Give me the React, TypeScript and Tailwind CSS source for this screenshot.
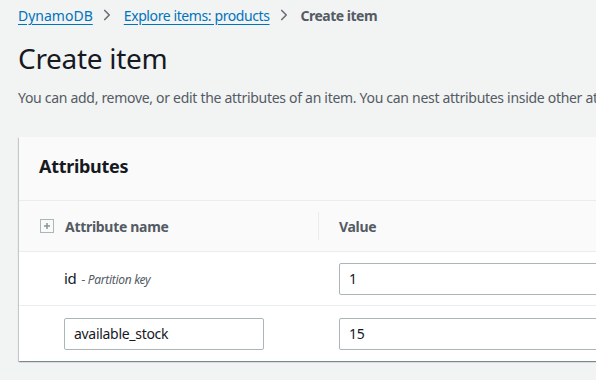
import { ChevronRight } from "lucide-react";

function PlusBox() {
    return (
        <svg width="14" height="14" viewBox="0 0 14 14" className="shrink-0">
            <rect x="0.5" y="0.5" width="13" height="13" fill="none" stroke="#aab7b8" strokeWidth="1" />
            <path d="M7 4v6M4 7h6" stroke="#879596" strokeWidth="1.5" />
        </svg>
    );
}

function Input({ value, className }: { value: string; className?: string }) {
    return (
        <div
            className={`h-[32px] flex items-center pl-[9px] bg-white border border-[#aab7b8] rounded-[2px] text-[14px] text-[#16191f] ${className ?? ""}`}
        >
            {value}
        </div>
    );
}

export default function App() {
    return (
        <div className="w-[596px] h-[380px] overflow-hidden bg-[#f2f3f3] font-['Noto_Sans',sans-serif] tracking-[-0.3px] text-[#16191f]">
            <div className="pl-[18px] pt-[5px]">
                {/* Breadcrumbs */}
                <nav className="flex items-center h-[20px] text-[14px] whitespace-nowrap">
                    <a className="text-[#0073bb] underline underline-offset-[3px] decoration-[#0073bb] tracking-normal">DynamoDB</a>
                    <ChevronRight size={18} strokeWidth={2.2} className="text-[#687078] ml-[5px] mr-[8px]" />
                    <a className="text-[#0073bb] underline underline-offset-[3px] decoration-[#0073bb] tracking-[-0.4px]">Explore items: products</a>
                    <ChevronRight size={18} strokeWidth={2.2} className="text-[#687078] ml-[5px] mr-[8px]" />
                    <span className="font-bold text-[#545b64] tracking-[-0.5px]">Create item</span>
                </nav>

                <h1 className="mt-[15px] text-[28px] leading-[36px] font-normal text-[#16191f]">Create item</h1>
                <p className="mt-[12px] text-[14px] leading-[20px] text-[#545b64] whitespace-nowrap">
                    You can add, remove, or edit the attributes of an item. You can nest attributes inside other attributes up to 32 levels deep.
                </p>

                {/* Attributes card */}
                <div className="mt-[29px] ml-[1px] w-[800px] bg-white shadow-[0_1px_1px_0_rgba(0,28,36,0.3),1px_1px_1px_0_rgba(0,28,36,0.15),-1px_1px_1px_0_rgba(0,28,36,0.15)]">
                    <div className="h-[64px] flex items-center pl-[20px] pb-[5px] bg-[#fafafa] border-b border-[#eaeded]">
                        <h2 className="text-[18px] font-bold leading-[24px] text-[#16191f]">Attributes</h2>
                    </div>

                    <div className="flex items-center h-[51px] bg-[#fafafa] border-b border-[#eaeded]">
                        <div className="w-[299px] flex items-center gap-[11px] pl-[21px]">
                            <PlusBox />
                            <span className="text-[14px] font-bold text-[#545b64]">Attribute name</span>
                        </div>
                        <div className="h-[28px] border-l border-[#eaeded]" />
                        <div className="pl-[20px] text-[14px] font-bold text-[#545b64]">Value</div>
                    </div>

                    <div className="flex items-center h-[54px] border-b border-[#eaeded]">
                        <div className="w-[320px] pl-[45px] flex items-baseline gap-[5px]">
                            <span className="text-[15px] text-[#16191f]">id</span>
                            <span className="text-[12px] italic text-[#545b64]">- Partition key</span>
                        </div>
                        <Input value="1" className="w-[420px]" />
                    </div>

                    <div className="flex items-center h-[55px]">
                        <div className="w-[320px] pl-[45px]">
                            <Input value="available_stock" className="w-[200px]" />
                        </div>
                        <Input value="15" className="w-[420px]" />
                    </div>
                </div>
            </div>
        </div>
    );
}
